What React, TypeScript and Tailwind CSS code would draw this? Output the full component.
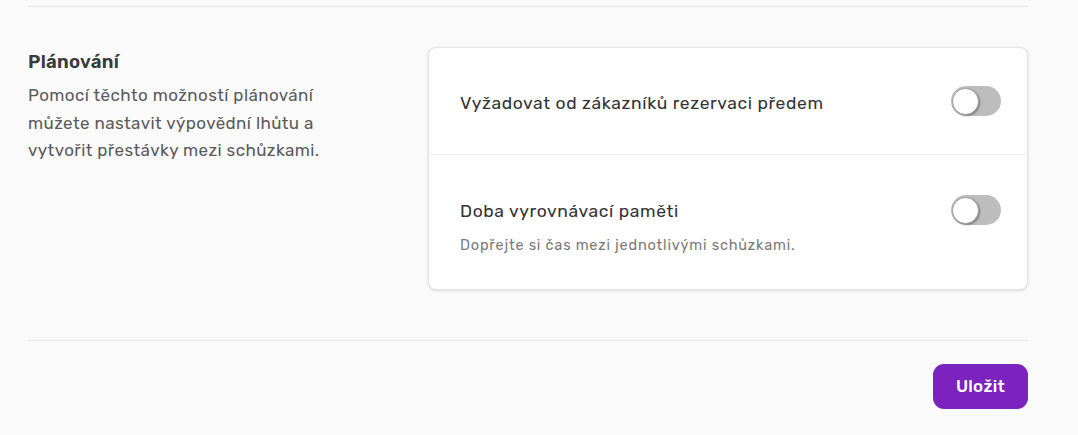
function Toggle() {
  return (
    <span className="relative inline-flex h-[30px] w-[50px] shrink-0 items-center rounded-full bg-[#bdbdbd]">
      <span className="absolute left-[1px] h-[27px] w-[27px] rounded-full border border-[#9e9e9e] bg-white shadow-[1px_1px_2px_rgba(0,0,0,0.35)]" />
    </span>
  );
}

export default function App() {
  return (
    <div className="min-h-[435px] bg-[#fafafa] px-[28px] pt-[6px] font-['Rubik','Inter','Noto_Sans',sans-serif] text-[#3b3b3b]">
      <div className="w-[1000px] border-t border-[#e6e6e6]" />

      <div className="flex w-[1000px] pt-[40px] pb-[50px]">
        <div className="w-[400px] pt-[3px]">
          <h3 className="text-[18.5px] font-semibold leading-[24px] tracking-[0.3px] text-[#3a3a3a]">
            Plánování
          </h3>
          <p className="mt-[8px] w-[340px] text-[17px] leading-[27.5px] tracking-[0.4px] text-[#5a5a5a]">
            Pomocí těchto možností plánování můžete nastavit výpovědní lhůtu a
            vytvořit přestávky mezi schůzkami.
          </p>
        </div>

        <div className="w-[600px] rounded-[8px] border border-[#e3e3e3] bg-white shadow-[0_1px_3px_rgba(0,0,0,0.12)]">
          <div className="flex h-[106px] items-center justify-between pl-[31px] pr-[26px]">
            <span className="mt-[4px] text-[17.5px] tracking-[0.6px] text-[#333]">
              Vyžadovat od zákazníků rezervaci předem
            </span>
            <Toggle />
          </div>
          <div className="border-t border-[#ececec] pl-[31px] pr-[26px] pt-[40px] pb-[32px]">
            <div className="flex items-center justify-between">
              <span className="mt-[3px] text-[17.5px] tracking-[0.6px] text-[#333]">
                Doba vyrovnávací paměti
              </span>
              <Toggle />
            </div>
            <p className="mt-[10px] text-[14.5px] tracking-[0.8px] text-[#7a7a7a]">
              Dopřejte si čas mezi jednotlivými schůzkami.
            </p>
          </div>
        </div>
      </div>

      <div className="w-[1000px] border-t border-[#e6e6e6]" />

      <div className="flex w-[1000px] justify-end pt-[23px]">
        <button className="h-[45px] w-[95px] rounded-[11px] bg-[#7b22bf] text-[17px] font-medium tracking-[0.3px] text-white">
          Uložit
        </button>
      </div>
    </div>
  );
}
